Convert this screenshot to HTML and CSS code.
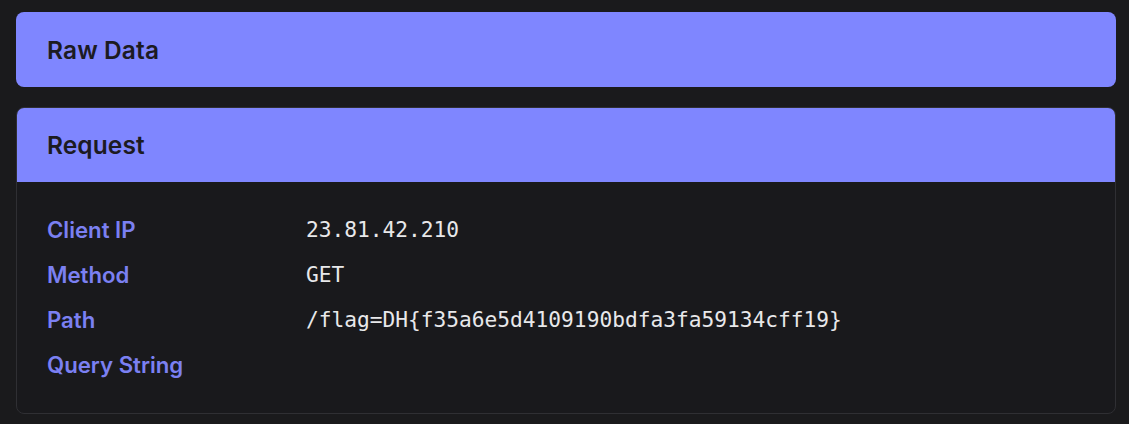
FILE: index.html
```html
<!DOCTYPE html>
<html>
<head>
<meta charset="utf-8">
<link rel="stylesheet" href="styles.css">
</head>
<body>
<div class="stack">
  <section class="card">
    <div class="card-head">Raw Data</div>
  </section>
  <section class="card bordered">
    <div class="card-head">Request</div>
    <div class="card-body">
      <div class="row"><div class="label">Client IP</div><div class="value">23.81.42.210</div></div>
      <div class="row"><div class="label">Method</div><div class="value">GET</div></div>
      <div class="row"><div class="label">Path</div><div class="value">/flag=DH{f35a6e5d4109190bdfa3fa59134cff19}</div></div>
      <div class="row"><div class="label">Query String</div><div class="value"></div></div>
    </div>
  </section>
</div>
</body>
</html>
```
FILE: styles.css
```css
html, body {
  margin: 0;
  padding: 0;
  background: #1a1a1c;
}
body {
  font-family: "Inter", "Lato", sans-serif;
}
.stack {
  display: flex;
  flex-direction: column;
  gap: 20px;
  padding: 12px 13px 11px 16px;
}
.card {
  border-radius: 8px;
  overflow: hidden;
  background: #19191c;
}
.card.bordered {
  border: 1px solid #2f2f33;
}
.card-head {
  background: #7f86ff;
  color: #1c1b22;
  height: 75px;
  display: flex;
  align-items: center;
  padding: 0 31px;
  font-size: 24.5px;
  font-weight: 600;
  letter-spacing: 0.1px;
}
.bordered .card-head {
  padding: 0 30px;
  height: 74px;
}
.card-body {
  padding: 25px 30px 26px;
}
.row {
  display: grid;
  grid-template-columns: 259px 1fr;
  height: 45px;
  align-items: center;
}
.label {
  color: #7b80f2;
  font-size: 22.2px;
  font-weight: 600;
}
.value {
  color: #e8e8ea;
  font-family: "DejaVu Sans Mono", monospace;
  font-size: 21.2px;
}
```
